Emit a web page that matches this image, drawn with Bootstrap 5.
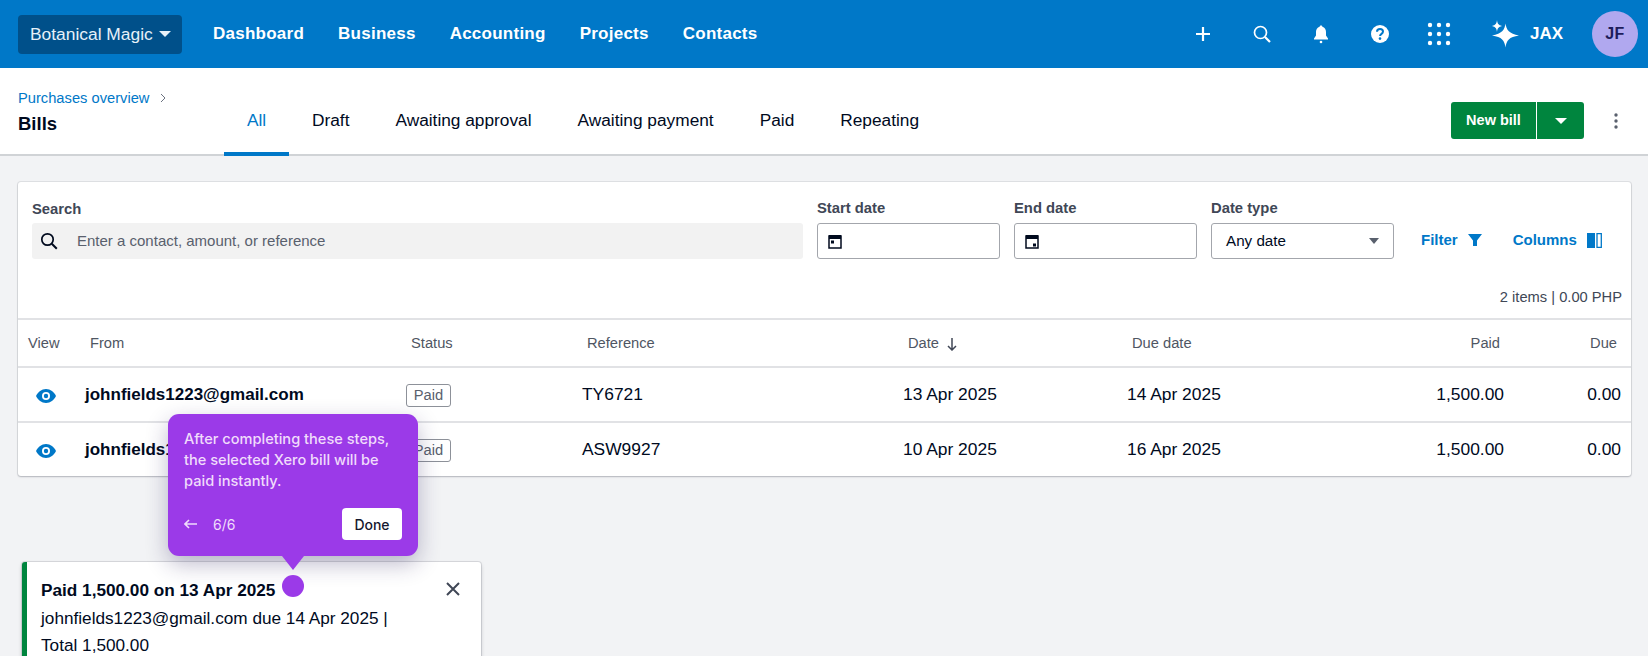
<!DOCTYPE html>
<html lang="en"><head><meta charset="utf-8"><title>Bills</title>
<link href="https://cdn.jsdelivr.net/npm/bootstrap@5.3.0/dist/css/bootstrap.min.css" rel="stylesheet">
<style>
html,body{height:656px;overflow:hidden}
body{background:#f2f3f5;font-family:"Liberation Sans",Arial,sans-serif;color:#000a1e;position:relative;width:1648px}
.topbar{height:68px;background:#0078c8;padding:0 18px;color:#fff}
.orgbtn{width:164px;height:39px;background:#00508a;border-radius:4px;color:#e6f1f9;font-size:17.4px;padding-left:12px;gap:6px}
.caret-d{width:0;height:0;border-left:6px solid transparent;border-right:6px solid transparent;border-top:6px solid currentColor;display:inline-block}
.mainlinks{margin-left:31px;gap:34px}
.mainlinks a{color:#fff;font-weight:700;font-size:17px;text-decoration:none;letter-spacing:.25px}
.topicons{margin-left:auto}
.slot{width:59px;display:flex;justify-content:center;align-items:center}
.jaxwrap{margin-left:23px}
.jax{font-weight:700;font-size:17px;margin-left:11px}
.avatar{width:46px;height:46px;border-radius:50%;background:#b0a8ef;color:#1d1c5a;font-weight:700;font-size:16px;letter-spacing:.5px;margin-left:29px;margin-right:-8px}
.subbar{height:88px;background:#fff;border-bottom:2px solid #d0d3d6;padding-left:18px;padding-right:26px}
.crumbcol{width:206px;padding-top:21px}
.crumb{font-size:14.7px;color:#0078c8;text-decoration:none;line-height:18px;display:flex;align-items:center;gap:11px}
.billtitle{font-size:18.5px;font-weight:700;margin:6px 0 0;line-height:22px}
.tabset{align-self:stretch}
.tabitem{padding:22px 23px 0;color:#000a1e;font-size:17.3px;text-decoration:none;display:flex;align-items:center;margin-bottom:-2px;border-bottom:4px solid transparent}
.tabitem.sel{color:#0078c8;border-bottom-color:#0078c8;width:65px;justify-content:center;padding:22px 0 0}
.newbill{height:37px;background:#00853e;border-radius:3px;color:#fff;font-weight:700;font-size:14.5px;margin-left:auto;width:133px;margin-top:19px}
.newbill span.lbl{width:86px;text-align:center;border-right:1px solid #fff;line-height:37px}
.newbill span.arr{flex:1;display:flex;justify-content:center}
.kebab{margin-left:26px;width:12px;margin-top:19px}
.panel{margin:26px 17px 0 18px;height:294px;background:#fff;border-radius:3px;box-shadow:0 0 0 1px rgba(0,10,30,.08),0 1px 2px rgba(0,10,30,.2)}
.filters{padding:17px 14px 0;height:138px;border-bottom:2px solid #e1e2e5}
.filterrow{gap:14px}
.fieldlbl{font-size:14.8px;font-weight:700;color:#404756;line-height:18px;margin-bottom:6px}
.lblsearch{margin-top:1px;margin-bottom:5px}
.field{height:36px;border-radius:3px;border:1px solid #a3a6ac;background:#fff;display:flex;align-items:center;width:183px;font-size:15.2px;padding:0 10px}
.fieldsel{padding:0 14px}
.searchbox{border:0;background:#f2f2f2;width:771px;color:#59606d;padding:0 8px;gap:19px;font-size:15px}
.actions{height:36px;margin-left:13px;gap:31px;margin-bottom:1px}
.actlink{color:#0078c8;font-weight:700;font-size:15px;text-decoration:none;display:flex;align-items:center;gap:10px}
.countline{font-size:14.7px;color:#404756;margin-top:29px;margin-right:-5px;line-height:18px;text-align:right}
.bigtable{table-layout:fixed;width:1613px;margin:0;--bs-table-bg:transparent}
.bigtable th{font-weight:400;font-size:14.7px;color:#4f5663;height:47px;vertical-align:middle;padding:0;border-bottom:2px solid #e1e2e5}
.bigtable td{font-size:17.4px;height:55px;vertical-align:middle;padding:0;border-bottom:2px solid #e1e2e5;color:#000a1e}
.bigtable tr:last-child td{border-bottom:0;height:54px}
.bigtable td.who{font-weight:700;font-size:17px}
.hv{padding-left:10px!important}.eyecell{padding-left:18px!important}.hf{padding-left:5px!important}.hs{padding-left:5px!important}
.amts{display:flex}
.amt-h{width:89px;text-align:right}.due-h{flex:1;text-align:right;padding-right:14px}
.amt-c{width:93px;text-align:right}.due-c{flex:1;text-align:right;padding-right:10px}
.paidtag{display:inline-block;border:1px solid #8d9199;border-radius:3px;color:#59606d;font-size:14.7px;line-height:21px;width:45px;text-align:center;background:#fff}
.tour{position:absolute;left:168px;top:414px;width:250px;height:142px;background:#9b3ae8;border-radius:11px;padding:15px 16px;color:#f0dcfb;font-family:Inter,sans-serif;font-weight:500;font-size:14.6px;line-height:21px;box-shadow:0 8px 22px rgba(40,30,90,.3);z-index:3}
.tour:after{content:"";position:absolute;left:114px;bottom:-14px;border-left:11px solid transparent;border-right:11px solid transparent;border-top:14px solid #9b3ae8}
.tourfoot{position:absolute;left:16px;right:16px;bottom:16px;display:flex;align-items:center;height:32px;font-size:14px;font-weight:400}
.donebtn{margin-left:auto;width:60px;height:32px;background:#fff;color:#15182e;border-radius:4px;font-size:14px;font-weight:500;display:flex;align-items:center;justify-content:center}
.tourdot{position:absolute;left:282px;top:575px;width:22px;height:22px;border-radius:50%;background:#9b3ae8;z-index:4}
.toast-note{position:absolute;left:22px;top:562px;width:459px;height:130px;background:#fff;border-left:5px solid #00853e;border-radius:3px;box-shadow:0 0 0 1px rgba(0,10,30,.1),0 2px 4px rgba(0,10,30,.2);padding:15px 14px;font-size:17.2px;line-height:27.5px;z-index:2}
.toast-note b{display:block}
.closex{position:absolute;right:21px;top:20px}
</style></head>
<body>
<nav class="topbar d-flex align-items-center">
  <div class="orgbtn d-flex align-items-center"><span>Botanical Magic</span><span class="caret-d"></span></div>
  <div class="mainlinks d-flex"><a href="#">Dashboard</a><a href="#">Business</a><a href="#">Accounting</a><a href="#">Projects</a><a href="#">Contacts</a></div>
  <div class="topicons d-flex align-items-center">
    <span class="slot"><svg width="16" height="16" viewBox="0 0 16 16"><path d="M8 1v14M1 8h14" stroke="#fff" stroke-width="2.2"/></svg></span>
    <span class="slot"><svg width="20" height="20" viewBox="0 0 20 20" fill="none" stroke="#fff"><circle cx="8.5" cy="8.5" r="6" stroke-width="1.7"/><path d="M13 13l5 5" stroke-width="2.2"/></svg></span>
    <span class="slot"><svg width="18" height="20" viewBox="0 0 18 20" fill="#fff"><path d="M9 1.5c-.8 0-1.3.5-1.4 1.2C5.200 3.400 4 5.400 4 8v3.500L2 14.500v1h14v-1l-2-3V8c0-2.600-1.200-4.600-3.600-5.300C10.300 2 9.800 1.500 9 1.500z"/><circle cx="9" cy="18" r="1.300"/></svg></span>
    <span class="slot"><svg width="20" height="20" viewBox="0 0 20 20"><circle cx="10" cy="10" r="9" fill="#fff"/><path d="M7 7.700C7 6 8.300 5 10 5s3 1 3 2.500-1 2-1.800 2.600c-.7.500-1.100.9-1.100 1.900" fill="none" stroke="#0078c8" stroke-width="2"/><circle cx="10" cy="14.600" r="1.300" fill="#0078c8"/></svg></span>
    <span class="slot"><svg width="24" height="24" viewBox="0 0 24 24" fill="#fff"><circle cx="3" cy="3" r="2.200"/><circle cx="12" cy="3" r="2.200"/><circle cx="21" cy="3" r="2.200"/><circle cx="3" cy="12" r="2.200"/><circle cx="12" cy="12" r="2.200"/><circle cx="21" cy="12" r="2.200"/><circle cx="3" cy="21" r="2.200"/><circle cx="12" cy="21" r="2.200"/><circle cx="21" cy="21" r="2.200"/></svg></span>
    <span class="jaxwrap d-flex align-items-center"><svg width="27" height="28" viewBox="0 0 27 28" fill="#fff"><path d="M13.500 3.500c.9 6.500 3.600 10 13.500 12C17 17 14.400 20.500 13.500 27.500c-.9-7-3.500-10.500-13.500-12C10 13.500 12.600 10 13.500 3.500z"/><path d="M5 0c.4 3.500 1.300 5 5 6-3.700 1-4.600 2.500-5 6-.4-3.500-1.300-5-5-6 3.700-1 4.600-2.500 5-6z"/></svg><span class="jax">JAX</span></span>
    <span class="avatar d-flex align-items-center justify-content-center">JF</span>
  </div>
</nav>
<header class="subbar d-flex align-items-center">
  <div class="crumbcol align-self-start">
    <a class="crumb" href="#">Purchases overview <svg width="6" height="10" viewBox="0 0 6 10" fill="none" stroke="#6b7280"><path d="M1 1l4 4-4 4"/></svg></a>
    <h1 class="billtitle">Bills</h1>
  </div>
  <div class="tabset d-flex">
    <a class="tabitem sel" href="#">All</a><a class="tabitem" href="#">Draft</a><a class="tabitem" href="#">Awaiting approval</a><a class="tabitem" href="#">Awaiting payment</a><a class="tabitem" href="#">Paid</a><a class="tabitem" href="#">Repeating</a>
  </div>
  <div class="newbill d-flex align-items-center"><span class="lbl">New bill</span><span class="arr"><span class="caret-d"></span></span></div>
  <svg class="kebab" width="12" height="18" viewBox="0 0 12 18" fill="#59606d"><circle cx="6" cy="3" r="1.700"/><circle cx="6" cy="9" r="1.700"/><circle cx="6" cy="15" r="1.700"/></svg>
</header>
<main class="panel">
  <div class="filters">
    <div class="d-flex filterrow">
      <div><div class="fieldlbl lblsearch">Search</div>
        <div class="field searchbox"><svg width="18" height="18" viewBox="0 0 18 18" fill="none" stroke="#000a1e"><circle cx="7.500" cy="7.500" r="5.700" stroke-width="1.700"/><path d="M11.800 11.800l5 5" stroke-width="2"/></svg><span>Enter a contact, amount, or reference</span></div></div>
      <div><div class="fieldlbl">Start date</div><div class="field"><svg width="14" height="16" viewBox="0 0 14 16"><path d="M1 3h12v12H1z" fill="#fff" stroke="#000a1e" stroke-width="1.500"/><path d="M1 2h12v4H1z" fill="#000a1e"/><path d="M3 7.500h3v3H3z" fill="#000a1e"/></svg></div></div>
      <div><div class="fieldlbl">End date</div><div class="field"><svg width="14" height="16" viewBox="0 0 14 16"><path d="M1 3h12v12H1z" fill="#fff" stroke="#000a1e" stroke-width="1.500"/><path d="M1 2h12v4H1z" fill="#000a1e"/><path d="M8 10.500h3v3H8z" fill="#000a1e"/></svg></div></div>
      <div><div class="fieldlbl">Date type</div><div class="field fieldsel justify-content-between"><span>Any date</span><span class="caret-d" style="color:#59606d;border-left-width:5px;border-right-width:5px"></span></div></div>
      <div class="actions d-flex align-self-end align-items-center">
        <a class="actlink" href="#">Filter <svg width="14" height="14" viewBox="0 0 14 14" fill="#0078c8"><path d="M0 1h14L9 7.500V13H5V7.500z"/></svg></a>
        <a class="actlink" href="#">Columns <svg width="15" height="15" viewBox="0 0 15 15"><path d="M0 0h8v15H0z" fill="#0078c8"/><path d="M10 .7h4.300v13.600H10z" fill="none" stroke="#0078c8" stroke-width="1.300"/></svg></a>
      </div>
    </div>
    <div class="countline">2 items | 0.00 PHP</div>
  </div>
  <table class="table bigtable">
    <colgroup><col style="width:67px"><col style="width:321px"><col style="width:176px"><col style="width:321px"><col style="width:224px"><col style="width:284px"><col style="width:220px"></colgroup>
    <thead><tr><th class="hv">View</th><th class="hf">From</th><th class="hs">Status</th><th class="hs">Reference</th><th class="hs">Date <svg class="ms-1" width="10" height="13" viewBox="0 0 10 13" fill="none" stroke="#404756" stroke-width="1.500"><path d="M5 0v12M1 8l4 4 4-4"/></svg></th><th class="hs">Due date</th><th><span class="amts"><span class="amt-h">Paid</span><span class="due-h">Due</span></span></th></tr></thead>
    <tbody>
      <tr><td class="eyecell"><svg width="20" height="14" viewBox="0 0 20 14"><path d="M10 0C5.500 0 2 3 0 7c2 4 5.500 7 10 7s8-3 10-7c-2-4-5.500-7-10-7z" fill="#0078c8"/><circle cx="10" cy="7" r="4" fill="#fff"/><circle cx="10" cy="7" r="2.200" fill="#0078c8"/></svg></td><td class="who">johnfields1223@gmail.com</td><td><span class="paidtag">Paid</span></td><td>TY6721</td><td>13 Apr 2025</td><td>14 Apr 2025</td><td><span class="amts"><span class="amt-c">1,500.00</span><span class="due-c">0.00</span></span></td></tr>
      <tr><td class="eyecell"><svg width="20" height="14" viewBox="0 0 20 14"><path d="M10 0C5.500 0 2 3 0 7c2 4 5.500 7 10 7s8-3 10-7c-2-4-5.500-7-10-7z" fill="#0078c8"/><circle cx="10" cy="7" r="4" fill="#fff"/><circle cx="10" cy="7" r="2.200" fill="#0078c8"/></svg></td><td class="who">johnfields1223@gmail.com</td><td><span class="paidtag">Paid</span></td><td>ASW9927</td><td>10 Apr 2025</td><td>16 Apr 2025</td><td><span class="amts"><span class="amt-c">1,500.00</span><span class="due-c">0.00</span></span></td></tr>
    </tbody>
  </table>
</main>
<aside class="tour">After completing these steps, the selected Xero bill will be paid instantly.
  <div class="tourfoot"><svg width="13" height="10" viewBox="0 0 13 10" fill="none" stroke="#f0dcfb" stroke-width="1.600"><path d="M13 5H1M5 1L1 5l4 4"/></svg><span class="ms-3">6/6</span><span class="donebtn">Done</span></div>
</aside>
<span class="tourdot"></span>
<aside class="toast-note"><b>Paid 1,500.00 on 13 Apr 2025</b>johnfields1223@gmail.com due 14 Apr 2025 |<br>Total 1,500.00
  <svg class="closex" width="14" height="14" viewBox="0 0 14 14" stroke="#404756" stroke-width="2"><path d="M1 1l12 12M13 1L1 13"/></svg></aside>
</body></html>
